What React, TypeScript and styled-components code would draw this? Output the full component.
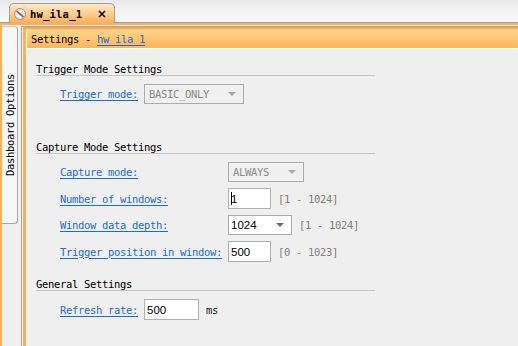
import React from 'react';
import styled, { createGlobalStyle } from 'styled-components';

const mono = `'DejaVu Sans Mono', 'Liberation Mono', monospace`;
const sans = `'Liberation Sans', Arial, sans-serif`;
const orange = '#ffae54';

const GlobalStyle = createGlobalStyle`
  html, body {
    margin: 0;
    padding: 0;
    background: #efefef;
  }
`;

const Root = styled.div`
  width: 518px;
  height: 346px;
  overflow: hidden;
  display: flex;
  flex-direction: column;
  background: #efefef;
  font-family: ${mono};
  font-size: 10.5px;
  letter-spacing: -0.32px;
  color: #000;
`;

const TabBar = styled.div`
  height: 23px;
  flex: none;
  display: flex;
  align-items: flex-end;
  background: linear-gradient(#ebebeb, #fafafa);
`;

const TabFiller = styled.div<{ $grow?: boolean }>`
  flex: ${(p) => (p.$grow ? '1' : 'none')};
  width: ${(p) => (p.$grow ? 'auto' : '9px')};
  height: 100%;
  box-sizing: border-box;
  border-bottom: 1px solid #a0a0a0;
`;

const Tab = styled.div`
  height: 20px;
  box-sizing: border-box;
  display: flex;
  align-items: center;
  padding: 0 8px 0 4px;
  border: 1px solid #a0a0a0;
  border-bottom: none;
  border-radius: 5px 5px 0 0;
  background: linear-gradient(#ffe9c8, #ffc27a 70%, ${orange});
`;

const TabLabel = styled.span`
  font-weight: bold;
  letter-spacing: 0.2px;
  margin-left: 4px;
  margin-right: 16px;
`;

const Frame = styled.div`
  flex: 1;
  display: flex;
  min-height: 0;
  border-top: 2px solid ${orange};
  border-left: 2px solid ${orange};
  padding-top: 1px;
  background: #fbfbfb;
`;

const SideStrip = styled.div`
  width: 19px;
  flex: none;
  background: #efefef;
`;

const SideTab = styled.div`
  width: 16px;
  height: 198px;
  box-sizing: border-box;
  display: flex;
  align-items: center;
  justify-content: center;
  background: #f6f6f6;
  border-top: 1px solid #c8c8c8;
  border-right: 1px solid #a8a8a8;
  border-bottom: 1px solid #a8a8a8;
  border-radius: 0 4px 4px 0;
`;

const SideLabel = styled.span`
  writing-mode: vertical-rl;
  transform: rotate(180deg);
  margin-left: 1px;
`;

const Panel = styled.div`
  flex: 1;
  display: flex;
  border-left: 1px solid #a4a4a4;
  border-top: 1px solid #a4a4a4;
  padding-left: 1px;
  background: #f2f2f2;
`;

const PanelInner = styled.div`
  flex: 1;
  display: flex;
  flex-direction: column;
  border-left: 3px solid ${orange};
  border-top: 2px solid #ffa646;
`;

const Header = styled.div`
  height: 19px;
  flex: none;
  display: flex;
  align-items: center;
  padding-left: 4px;
  border-left: 1px solid #fff;
  border-bottom: 1px solid #fff;
  background: linear-gradient(#ffd68c, #ffb35c);
`;

const Content = styled.div`
  flex: 1;
  display: flex;
  flex-direction: column;
  padding: 14px 0 0 9px;
  border-left: 1px solid #f8f8f8;
  background: #efefef;
`;

const Link = styled.span`
  color: #1b6ed0;
  text-decoration: underline;
  text-underline-offset: 2px;
`;

const Section = styled.section<{ $gap: number }>`
  margin-top: ${(p) => p.$gap}px;
`;

const SectionTitle = styled.div`
  width: 339px;
  height: 12px;
  line-height: 12px;
  border-bottom: 1px solid #c6c6c6;
`;

const Rows = styled.div`
  margin-top: 8px;
  padding-left: 24px;
  display: grid;
  grid-template-columns: max-content max-content;
  column-gap: 6px;
  row-gap: 6px;
  align-items: center;
`;

const Field = styled.div`
  display: flex;
  align-items: center;
  gap: 7px;
`;

const Combo = styled.div<{ $width: number; $disabled?: boolean }>`
  width: ${(p) => p.$width}px;
  height: 20px;
  box-sizing: border-box;
  display: flex;
  align-items: center;
  justify-content: space-between;
  padding: 0 7px 0 ${(p) => (p.$disabled ? 4 : 2)}px;
  border: 1px solid #ababab;
  background: ${(p) => (p.$disabled ? '#f0f0f0' : '#fff')};
  color: ${(p) => (p.$disabled ? '#8a8a8a' : '#000')};
  font-family: ${(p) => (p.$disabled ? mono : sans)};
  font-size: ${(p) => (p.$disabled ? '10.5px' : '11.5px')};
  letter-spacing: ${(p) => (p.$disabled ? '-0.32px' : '0')};
`;

const Arrow = styled.span<{ $disabled?: boolean }>`
  width: 0;
  height: 0;
  border-left: 4px solid transparent;
  border-right: 4px solid transparent;
  border-top: 4px solid ${(p) => (p.$disabled ? '#a8a8a8' : '#6e6e6e')};
`;

const Input = styled.div<{ $width: number }>`
  width: ${(p) => p.$width}px;
  height: 21px;
  box-sizing: border-box;
  display: flex;
  align-items: center;
  padding-left: 2px;
  border: 1px solid #b0b0b0;
  background: #fff;
  font-family: ${sans};
  font-size: 11.5px;
  letter-spacing: 0;
`;

const Caret = styled.span`
  width: 1px;
  height: 13px;
  background: #000;
  margin-right: -1px;
`;

const Range = styled.span`
  color: #808080;
`;

const Unit = styled.span`
  color: #222;
`;

const GaugeIcon = () => (
  <svg width='12' height='12' viewBox='0 0 12 12'>
    <circle cx='6' cy='6' r='5.4' fill='#fdfdfd' stroke='#8c8c8c' strokeWidth='1' />
    <path d='M6 1.6v1.2M1.6 6h1.2M10.4 6H9.2M2.9 2.9l.8.8M9.1 2.9l-.8.8' stroke='#9a9a9a' strokeWidth='0.8' />
    <path d='M3 3.4L9 8.6' stroke='#d8302c' strokeWidth='1.6' strokeLinecap='round' />
  </svg>
);

const CloseIcon = () => (
  <svg width='8' height='8' viewBox='0 0 8 8'>
    <path d='M1 1l6 6M7 1L1 7' stroke='#000' strokeWidth='1.5' />
  </svg>
);

export default function App() {
  return (
    <Root>
      <GlobalStyle />
      <TabBar>
        <TabFiller />
        <Tab>
          <GaugeIcon />
          <TabLabel>hw_ila_1</TabLabel>
          <CloseIcon />
        </Tab>
        <TabFiller $grow />
      </TabBar>
      <Frame>
        <SideStrip>
          <SideTab>
            <SideLabel>Dashboard Options</SideLabel>
          </SideTab>
        </SideStrip>
        <Panel>
          <PanelInner>
            <Header>
              Settings -&nbsp;<Link>hw_ila_1</Link>
            </Header>
            <Content>
              <Section $gap={0}>
                <SectionTitle>Trigger Mode Settings</SectionTitle>
                <Rows>
                  <Link>Trigger mode:</Link>
                  <Combo $width={100} $disabled>
                    BASIC_ONLY
                    <Arrow $disabled />
                  </Combo>
                </Rows>
              </Section>
              <Section $gap={37}>
                <SectionTitle>Capture Mode Settings</SectionTitle>
                <Rows>
                  <Link>Capture mode:</Link>
                  <Combo $width={76} $disabled>
                    ALWAYS
                    <Arrow $disabled />
                  </Combo>
                  <Link>Number of windows:</Link>
                  <Field>
                    <Input $width={43}>
                      <Caret />1
                    </Input>
                    <Range>[1 - 1024]</Range>
                  </Field>
                  <Link>Window data depth:</Link>
                  <Field>
                    <Combo $width={64}>
                      1024
                      <Arrow />
                    </Combo>
                    <Range>[1 - 1024]</Range>
                  </Field>
                  <Link>Trigger position in window:</Link>
                  <Field>
                    <Input $width={43}>500</Input>
                    <Range>[0 - 1023]</Range>
                  </Field>
                </Rows>
              </Section>
              <Section $gap={16}>
                <SectionTitle>General Settings</SectionTitle>
                <Rows>
                  <Link>Refresh rate:</Link>
                  <Field>
                    <Input $width={55}>500</Input>
                    <Unit>ms</Unit>
                  </Field>
                </Rows>
              </Section>
            </Content>
          </PanelInner>
        </Panel>
      </Frame>
    </Root>
  );
}
